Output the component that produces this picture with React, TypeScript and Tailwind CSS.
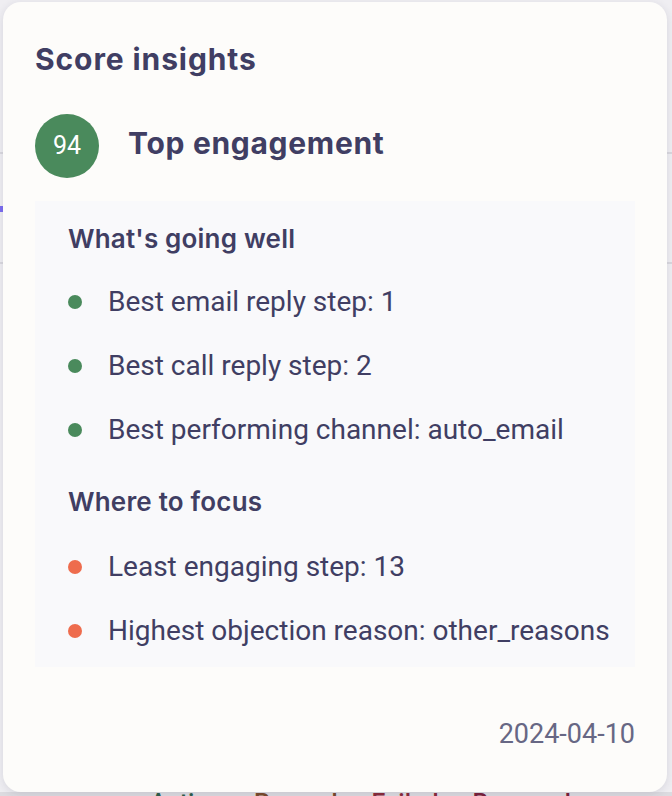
import React from 'react';

const good = [
  'Best email reply step: 1',
  'Best call reply step: 2',
  'Best performing channel: auto_email',
];

const focus = [
  'Least engaging step: 13',
  'Highest objection reason: other_reasons',
];

const heading = { fontFamily: 'Inter, "Open Sans", sans-serif' };

function Row({ text, dot }: { text: string; dot: string }) {
  return (
    <li className="flex items-center h-[64px]">
      <span className={`w-[14px] h-[14px] rounded-full shrink-0 ${dot}`} />
      <span className="ml-[26px] text-[28px] leading-[40px] text-[#403e63]">{text}</span>
    </li>
  );
}

export default function App() {
  return (
    <div
      className="relative w-[672px] h-[796px] overflow-hidden bg-[#efeef2]"
      style={{ fontFamily: 'Roboto, "Liberation Sans", sans-serif' }}
    >
      {/* page underneath the popover */}
      <div className="absolute left-0 right-0 top-[152px] h-[2px] bg-[#d9d8de]" />
      <div className="absolute left-0 right-0 top-[262px] h-[2px] bg-[#d9d8de]" />
      <div className="absolute left-0 top-[206px] w-[3px] h-[6px] bg-[#7b6cf0]" />
      <div className="absolute left-0 right-0 top-[792px] h-[4px] bg-[#dcdbe0]" />
      <div className="absolute top-[786px] left-[150px] flex gap-[34px] text-[25px] leading-[36px] font-medium">
        <span className="text-[#2f5e4a]">Active</span>
        <span className="text-[#7a4a2a]">Paused</span>
        <span className="text-[#8a2a3a]">Failed</span>
        <span className="text-[#7a1f3a]">Bounced</span>
      </div>

      {/* popover card */}
      <div className="absolute left-[3px] top-[2px] w-[664px] h-[790px] rounded-[18px] bg-[#fdfcfa] shadow-[0_2px_8px_rgba(40,40,70,0.12)] px-[32px] pt-[37px] flex flex-col">
        <h2 className="text-[30px] leading-[40px] font-bold text-[#403e63] tracking-[0.9px]" style={heading}>
          Score insights
        </h2>

        <div className="flex items-center mt-[35px]">
          <div className="w-[64px] h-[64px] rounded-full bg-[#4a8a5c] flex items-center justify-center text-white text-[25px]">
            94
          </div>
          <div
            className="ml-[29px] pb-[6px] text-[30px] leading-[40px] font-bold text-[#403e63] tracking-[0.7px]"
            style={heading}
          >
            Top engagement
          </div>
        </div>

        <div className="mt-[23px] bg-[#f9f9fb] w-[600px] pl-[33px] pt-[18px] pb-[4px]">
          <h3 className="text-[26px] leading-[40px] font-semibold text-[#403e63] tracking-[0.2px]" style={heading}>
            What's going well
          </h3>
          <ul className="mt-[11px]">
            {good.map((t) => (
              <Row key={t} text={t} dot="bg-[#4a8a5c]" />
            ))}
          </ul>
          <h3
            className="mt-[20px] text-[26px] leading-[40px] font-semibold text-[#403e63] tracking-[0.2px]"
            style={heading}
          >
            Where to focus
          </h3>
          <ul className="mt-[13px]">
            {focus.map((t) => (
              <Row key={t} text={t} dot="bg-[#ee6c4d]" />
            ))}
          </ul>
        </div>

        <div className="mt-[47px] w-[600px] text-right text-[27px] leading-[40px] text-[#676784]">2024-04-10</div>
      </div>
    </div>
  );
}
